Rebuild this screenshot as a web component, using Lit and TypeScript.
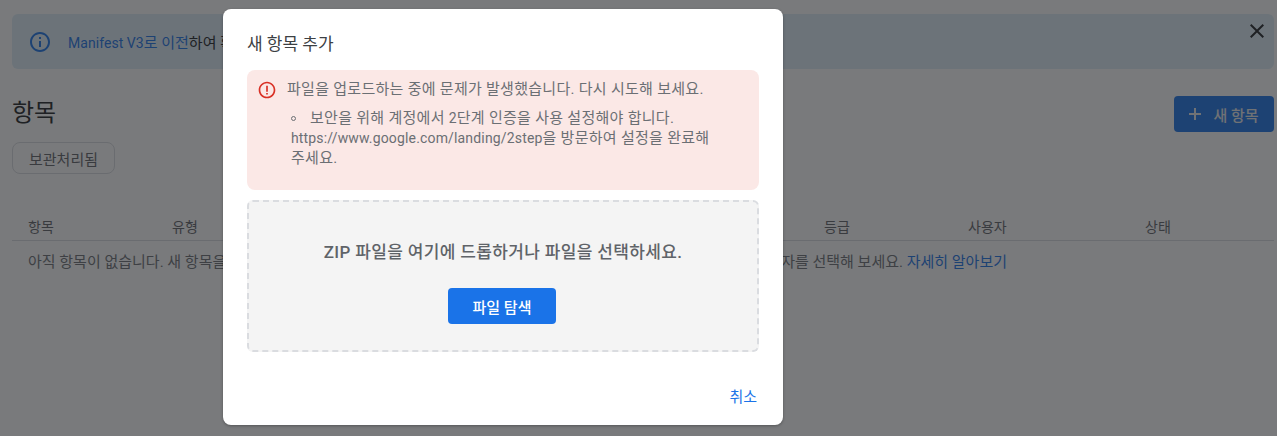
import { LitElement, html, css } from "lit";
import { customElement } from "lit/decorators.js";

@customElement("app-root")
export class AppRoot extends LitElement {
  static styles = css`
    :host {
      display: block;
      position: relative;
      width: 1277px;
      height: 436px;
      overflow: hidden;
      background: #fff;
      font-family: Roboto, "Noto Sans CJK KR", sans-serif;
      font-size: 14px;
      color: #5f6368;
    }
    .page { padding: 14px 3px 0 12px; display: flex; flex-direction: column; }
    .banner {
      height: 55px;
      background: #deeef8;
      border-radius: 6px;
      display: flex;
      align-items: center;
      padding-left: 16px;
      position: relative;
      color: #202124;
      box-sizing: border-box;
      font-size: 15px;
    }
    .banner svg.info { width: 24px; height: 24px; margin-right: 16px; flex: none; }
    .banner a { color: #1a73e8; }
    .latin { font-size: 14px; letter-spacing: 0.16px; }
    .banner .latin { letter-spacing: 0.05px; }
    .close { position: absolute; top: 5px; right: 5px; width: 24px; height: 24px; }
    .head { display: flex; justify-content: space-between; align-items: flex-start; margin-top: 27px; }
    h1 { margin: 0; font-size: 24px; font-weight: 400; color: #202124; line-height: 32px; margin-top: 1px; }
    .new {
      width: 100px; height: 36px; background: #1a73e8; color: #e8eaed; border-radius: 4px;
      display: flex; align-items: center; justify-content: center; gap: 12px; font-weight: 500; font-size: 15px;
    }
    .new svg { width: 12px; height: 12px; }
    .chip {
      align-self: flex-start; margin-top: 10px; width: 103px; height: 32px; box-sizing: border-box;
      border: 1px solid #dadce0; border-radius: 8px; display: flex; align-items: center; justify-content: center;
      font-size: 15px;
    }
    .thead {
      margin-top: 40px; height: 24px; padding-bottom: 2px; border-bottom: 1px solid #dadce0;
      display: grid; grid-template-columns: 144px 652px 144px 177px 1fr; padding-left: 16px; align-items: center;
      box-sizing: content-box;
    }
    .row {
      display: flex; justify-content: space-between; padding-left: 16px; box-sizing: border-box;
      margin-top: 11px; width: 995px; line-height: 20px; font-size: 15px; color: #6b6f74;
    }
    .row a { color: #1a73e8; }
    .backdrop { position: absolute; inset: 0; background: rgba(32, 33, 36, 0.6); }
    .modal {
      position: absolute; left: 223px; top: 9px; width: 560px; height: 416px; background: #fff; border-radius: 8px;
      box-sizing: border-box; padding: 24px; display: flex; flex-direction: column;
      box-shadow: 0 1px 3px rgba(0,0,0,.3);
    }
    .title { font-size: 17px; line-height: 20px; color: #3c4043; margin-top: 1px; }
    .err {
      margin-top: 16px; height: 120px; background: #fbe8e6; border-radius: 8px; padding: 9px 12px; box-sizing: border-box;
      display: grid; grid-template-columns: 16px 1fr; grid-template-rows: 20px 1fr; column-gap: 12px; line-height: 20px; color: #6b6f74;
      font-size: 15px; letter-spacing: 0.28px;
    }
    .err svg { width: 20px; height: 20px; margin: 1px 0 0 -2px; }
    .detail { grid-column: 2; margin: 9px 0 0 4px; width: 430px; }
    .bullet { display: inline-block; width: 3px; height: 3px; border: 1px solid #6b6f74; border-radius: 50%; margin: 0 14px 2px 0; }
    .drop {
      margin-top: 10px; height: 152px; box-sizing: border-box; background: #f4f4f4; border: 2px dashed #dadce0; border-radius: 6px;
      display: flex; flex-direction: column; align-items: center; padding-top: 38px;
    }
    .drop p { margin: 1px 0 0; font-size: 17px; line-height: 22px; font-weight: 500; color: #5f6368; letter-spacing: 0.35px; }
    .drop button {
      margin: 25px 2px 0 0; width: 108px; height: 36px; border: 0; border-radius: 4px; background: #1a73e8; color: #fff;
      font: 500 15px Roboto, "Noto Sans CJK KR", sans-serif;
    }
    .foot { margin-top: auto; align-self: flex-end; color: #1a73e8; line-height: 20px; margin-right: 2px; margin-bottom: -6px; font-size: 15px; }
  `;

  render() {
    return html`
      <div class="page">
        <div class="banner">
          <svg class="info" viewBox="0 0 24 24" fill="#1a73e8"><path d="M11 7h2v2h-2zm0 4h2v6h-2zm1-9C6.48 2 2 6.48 2 12s4.48 10 10 10 10-4.48 10-10S17.52 2 12 2zm0 18c-4.41 0-8-3.59-8-8s3.59-8 8-8 8 3.59 8 8-3.59 8-8 8z"/></svg>
          <span><a><span class="latin">Manifest V3</span>로 이전</a>하여 확장 프로그램을 최신 상태로 유지하세요.</span>
          <svg class="close" viewBox="0 0 24 24" fill="#202124"><path d="M19 6.41 17.59 5 12 10.59 6.41 5 5 6.41 10.59 12 5 17.59 6.41 19 12 13.41 17.59 19 19 17.59 13.41 12z"/></svg>
        </div>
        <div class="head">
          <h1>항목</h1>
          <div class="new">
            <svg viewBox="0 0 12 12" fill="none" stroke="#e8eaed" stroke-width="2"><path d="M6 0v12M0 6h12"/></svg>
            <span>새 항목</span>
          </div>
        </div>
        <div class="chip">보관처리됨</div>
        <div class="thead"><span>항목</span><span>유형</span><span>등급</span><span>사용자</span><span>상태</span></div>
        <div class="row">
          <span>아직 항목이 없습니다. 새 항목을 추가해 보세요.</span>
          <span>다른 사용자를 선택해 보세요. <a>자세히 알아보기</a></span>
        </div>
      </div>
      <div class="backdrop"></div>
      <div class="modal">
        <div class="title">새 항목 추가</div>
        <div class="err">
          <svg viewBox="0 0 24 24" fill="#d93025"><path d="M11 7h2v7h-2zm0 8.5h2v2h-2zM12 2C6.48 2 2 6.48 2 12s4.48 10 10 10 10-4.48 10-10S17.52 2 12 2zm0 18c-4.41 0-8-3.59-8-8s3.59-8 8-8 8 3.59 8 8-3.59 8-8 8z"/></svg>
          <span>파일을 업로드하는 중에 문제가 발생했습니다. 다시 시도해 보세요.</span>
          <div class="detail"><span class="bullet"></span>보안을 위해 계정에서 <span class="latin">2</span>단계 인증을 사용 설정해야 합니다. <span class="latin">https://www.google.com/landing/2step</span>을 방문하여 설정을 완료해 주세요.</div>
        </div>
        <div class="drop">
          <p>ZIP 파일을 여기에 드롭하거나 파일을 선택하세요.</p>
          <button>파일 탐색</button>
        </div>
        <div class="foot">취소</div>
      </div>
    `;
  }
}
